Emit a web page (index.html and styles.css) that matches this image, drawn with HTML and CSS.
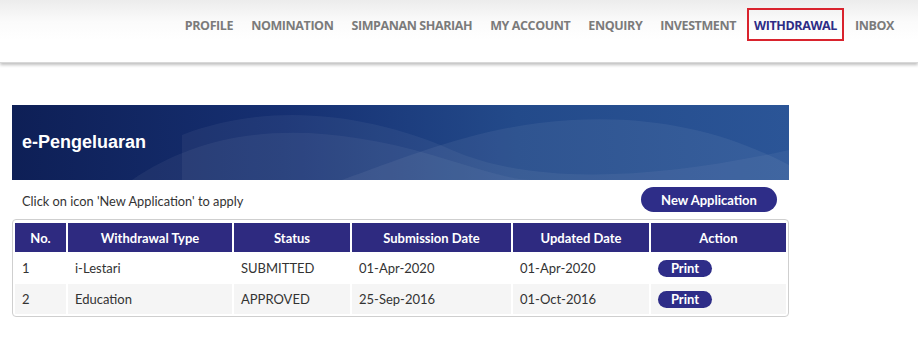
FILE: index.html
```html
<!DOCTYPE html>
<html>
<head>
<meta charset="utf-8">
<link rel="stylesheet" href="styles.css">
</head>
<body>
<header class="topbar">
  <nav class="nav">
    <a class="nav-item">PROFILE</a>
    <a class="nav-item">NOMINATION</a>
    <a class="nav-item">SIMPANAN SHARIAH</a>
    <a class="nav-item">MY ACCOUNT</a>
    <a class="nav-item">ENQUIRY</a>
    <a class="nav-item">INVESTMENT</a>
    <a class="nav-item active">WITHDRAWAL</a>
    <a class="nav-item">INBOX</a>
  </nav>
</header>
<main class="content">
  <section class="banner">
    <svg class="waves" viewBox="0 0 777 75" preserveAspectRatio="none">
      <path d="M120 75 C 200 20, 300 15, 420 50 C 470 65, 500 75, 520 75 Z" fill="rgba(255,255,255,0.05)"/>
      <path d="M170 30 C 260 -5, 360 10, 440 45 C 520 80, 640 75, 777 45 L777 75 L 170 75 Z" fill="rgba(255,255,255,0.05)"/>
      <path d="M330 75 C 400 50, 470 20, 560 15 C 650 10, 720 30, 777 60 L777 75 Z" fill="rgba(255,255,255,0.06)"/>
    </svg>
    <h1 class="banner-title">e-Pengeluaran</h1>
  </section>
  <div class="toolbar">
    <span class="hint">Click on icon 'New Application' to apply</span>
    <button class="btn-new">New Application</button>
  </div>
  <div class="table-wrap">
    <table class="grid">
      <thead>
        <tr>
          <th class="c-no">No.</th>
          <th class="c-type">Withdrawal Type</th>
          <th class="c-status">Status</th>
          <th class="c-sub">Submission Date</th>
          <th class="c-upd">Updated Date</th>
          <th class="c-act">Action</th>
        </tr>
      </thead>
      <tbody>
        <tr>
          <td>1</td><td>i-Lestari</td><td>SUBMITTED</td><td>01-Apr-2020</td><td>01-Apr-2020</td>
          <td><button class="btn-print">Print</button></td>
        </tr>
        <tr class="alt">
          <td>2</td><td>Education</td><td>APPROVED</td><td>25-Sep-2016</td><td>01-Oct-2016</td>
          <td><button class="btn-print">Print</button></td>
        </tr>
      </tbody>
    </table>
  </div>
</main>
</body>
</html>
```
FILE: styles.css
```css
* { box-sizing: border-box; }
body {
  margin: 0;
  background: #fff;
  font-family: Lato, "Open Sans", sans-serif;
  color: #333;
}
.topbar {
  height: 63px;
  background: linear-gradient(#ececec 0px, #fbfbfb 22px, #ffffff 40px);
  box-shadow: 0 2px 3px rgba(0,0,0,0.25);
  border-bottom: 1px solid #d8d8d8;
  display: flex;
  justify-content: flex-end;
  padding-right: 17px;
}
.nav {
  display: flex;
  align-items: flex-start;
  padding-top: 8px;
}
.nav-item {
  font-family: "Open Sans", sans-serif;
  font-weight: 700;
  font-size: 12.5px;
  letter-spacing: -0.4px;
  color: #7b7b7b;
  height: 33px;
  line-height: 31px;
  padding: 0 5px;
  margin-left: 4px;
  border: 2px solid transparent;
}
.nav-item.active {
  color: #2e2c86;
  border-color: #d9232d;
}
.content {
  padding: 42px 0 0 12px;
  width: 789px;
}
.banner {
  position: relative;
  height: 75px;
  background: linear-gradient(90deg, #0e1f56 0%, #163072 35%, #234a8a 65%, #2b5597 100%);
  display: flex;
  align-items: center;
  padding-left: 10px;
  overflow: hidden;
}
.waves {
  position: absolute;
  inset: 0;
  width: 100%;
  height: 100%;
}
.banner-title {
  position: relative;
  margin: 0;
  color: #fff;
  font-family: "Liberation Sans", Arial, sans-serif;
  font-weight: 700;
  font-size: 18px;
}
.toolbar {
  display: flex;
  justify-content: space-between;
  align-items: center;
  height: 39px;
  padding: 0 12px 0 10px;
}
.hint {
  font-size: 12.8px;
  color: #333;
  margin-top: 2px;
}
.btn-new {
  background: #2e2d88;
  color: #fff;
  border: none;
  border-radius: 13px;
  height: 25px;
  width: 136px;
  font-family: Lato, sans-serif;
  font-weight: 700;
  font-size: 13px;
  padding: 0;
}
.table-wrap {
  border: 1px solid #cfcfcf;
  border-radius: 4px;
  padding: 2px 2px 1px 2px;
}
.grid {
  border-collapse: separate;
  border-spacing: 2px 1px;
  margin: 0 -2px;
  width: calc(100% + 4px);
  font-size: 13px;
}
.grid th {
  background: #2e2a80;
  color: #fff;
  font-weight: 700;
  height: 29px;
  font-size: 13px;
  text-align: center;
}
.grid td {
  height: 30px;
  padding: 0 0 0 7px;
  color: #333;
}
.grid tr.alt td { background: #f5f5f5; }
.c-no { width: 51px; }
.c-type { width: 164px; }
.c-status { width: 116px; }
.c-sub { width: 159px; }
.c-upd { width: 136px; }
.btn-print {
  background: #2e2d88;
  color: #fff;
  border: none;
  border-radius: 9px;
  height: 17px;
  width: 54px;
  font-family: Lato, sans-serif;
  font-weight: 700;
  font-size: 13px;
  line-height: 17px;
  padding: 0;
}
```
